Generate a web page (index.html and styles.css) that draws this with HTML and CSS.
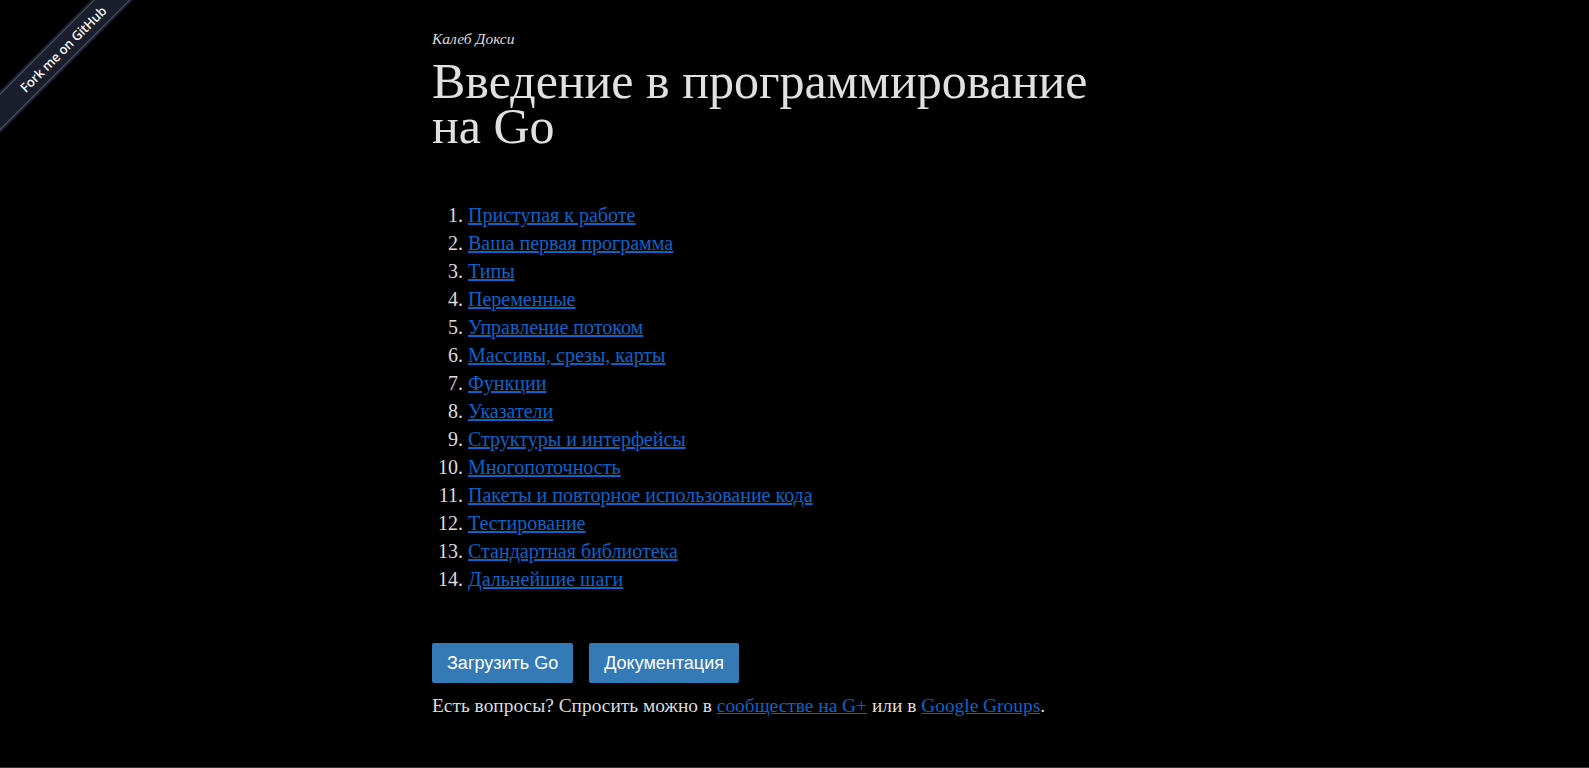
FILE: index.html
```html
<!DOCTYPE html>
<html lang="ru">
<head>
<meta charset="utf-8">
<title>Введение в программирование на Go</title>
<link rel="stylesheet" href="styles.css">
</head>
<body>
<a class="ribbon" href="#"><span>Fork me on GitHub</span></a>
<main class="page">
  <p class="author">Калеб Докси</p>
  <h1 class="title">Введение в программирование на&nbsp;Go</h1>
  <ol class="toc">
    <li><a href="#">Приступая к работе</a></li>
    <li><a href="#">Ваша первая программа</a></li>
    <li><a href="#">Типы</a></li>
    <li><a href="#">Переменные</a></li>
    <li><a href="#">Управление потоком</a></li>
    <li><a href="#">Массивы, срезы, карты</a></li>
    <li><a href="#">Функции</a></li>
    <li><a href="#">Указатели</a></li>
    <li><a href="#">Структуры и интерфейсы</a></li>
    <li><a href="#">Многопоточность</a></li>
    <li><a href="#">Пакеты и повторное использование кода</a></li>
    <li><a href="#">Тестирование</a></li>
    <li><a href="#">Стандартная библиотека</a></li>
    <li><a href="#">Дальнейшие шаги</a></li>
  </ol>
  <div class="actions">
    <a class="btn" href="#">Загрузить Go</a>
    <a class="btn" href="#">Документация</a>
  </div>
  <p class="help">Есть вопросы? Спросить можно в <a href="#">сообществе на G+</a> или в <a href="#">Google Groups</a>.</p>
</main>
</body>
</html>
```
FILE: styles.css
```css
html, body {
  margin: 0;
  padding: 0;
  background: #000;
  height: 100%;
}
body {
  color: #dcdcdc;
  font-family: "Liberation Serif", "DejaVu Serif", serif;
  border-bottom: 1px solid #3a3a3a;
  box-sizing: border-box;
  overflow: hidden;
}
.ribbon {
  position: absolute;
  top: 0;
  left: 0;
  width: 180px;
  height: 180px;
  overflow: hidden;
  text-decoration: none;
}
.ribbon span {
  position: absolute;
  top: 36px;
  left: -52px;
  width: 230px;
  transform: rotate(-45deg);
  background: #1b1f2d;
  color: #f2f2f2;
  font-family: "Open Sans", "Liberation Sans", sans-serif;
  font-weight: 600;
  font-size: 13px;
  letter-spacing: -0.2px;
  line-height: 24px;
  text-align: center;
  border-top: 1px solid #505668;
  border-bottom: 1px solid #505668;
  box-shadow: 0 0 0 2px #1b1f2d;
}
.page {
  width: 725px;
  margin: 0 0 0 432px;
  padding-top: 29px;
}
.author {
  margin: 0;
  font-style: italic;
  font-size: 15.5px;
  line-height: 20px;
}
.title {
  margin: 10px 0 0;
  font-weight: normal;
  font-size: 50px;
  line-height: 45px;
  color: #e0e0e0;
}
.toc {
  margin: 52px 0 0;
  padding-left: 36px;
  font-size: 20px;
  line-height: 28px;
}
.toc a, .help a {
  color: #0a63c9;
}
.actions {
  display: flex;
  gap: 16px;
  margin-top: 50px;
}
.btn {
  display: block;
  background: #337ab7;
  color: #fff;
  text-decoration: none;
  font-family: "Liberation Sans", Arial, sans-serif;
  font-size: 18px;
  line-height: 40px;
  padding: 0 15px;
  border-radius: 2px;
}
.help {
  margin: 10px 0 0;
  font-size: 19.4px;
  line-height: 26px;
}
```
